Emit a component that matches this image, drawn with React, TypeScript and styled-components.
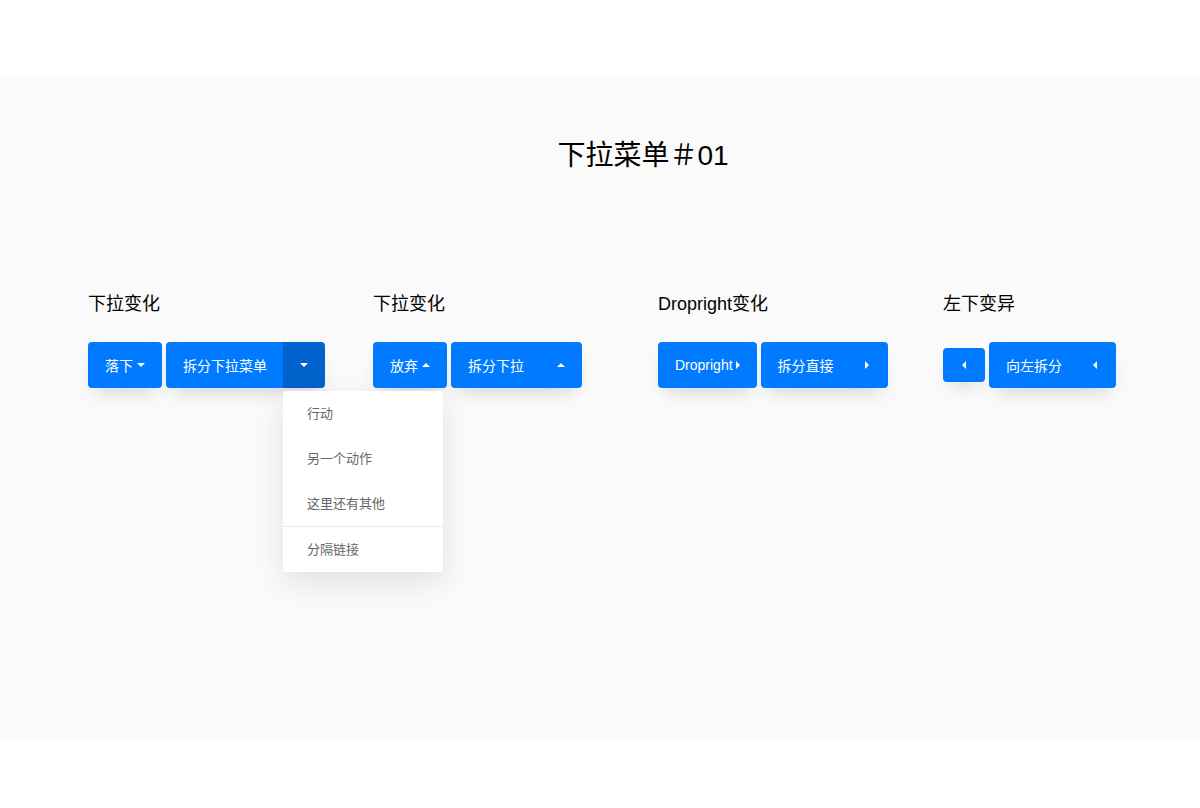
import React from "react";
import styled, { createGlobalStyle, css } from "styled-components";

const GlobalStyle = createGlobalStyle`
  body {
    margin: 0;
    background: #fff;
    font-family: "Liberation Sans", "Noto Sans CJK SC", sans-serif;
  }
`;

type Dir = "down" | "up" | "right" | "left";

const Page = styled.div`
  width: 1200px;
  min-height: 808px;
  padding-top: 75px;
  box-sizing: border-box;
`;

const Section = styled.section`
  background: #fafafa;
  height: 666px;
  padding-top: 65px;
  box-sizing: border-box;
`;

const Title = styled.h2`
  margin: 0;
  padding-left: 86px;
  text-align: center;
  font-size: 28px;
  font-weight: 400;
  line-height: 31px;
  color: #000;
`;

const Grid = styled.div`
  display: grid;
  grid-template-columns: repeat(4, 285px);
  padding-left: 88px;
  margin-top: 120px;
`;

const Label = styled.h3`
  margin: 0 0 24px;
  font-size: 18px;
  font-weight: 400;
  line-height: 27px;
  color: #000;
`;

const Row = styled.div`
  display: flex;
  align-items: center;
  gap: 4px;
  height: 46px;
`;

const btnBase = css`
  border: 0;
  background: #007bff;
  color: #fff;
  font-family: inherit;
  font-size: 14px;
  display: flex;
  align-items: center;
  justify-content: center;
  cursor: pointer;
`;

const Button = styled.button<{ $small?: boolean }>`
  ${btnBase};
  height: ${({ $small }) => ($small ? "34px" : "46px")};
  padding: ${({ $small }) => ($small ? "0" : "0 17px")};
  width: ${({ $small }) => ($small ? "42px" : "auto")};
  gap: 4px;
  border-radius: 4px;
  box-shadow: 0 10px 20px -8px rgba(0, 0, 0, 0.18);
`;

const SplitGroup = styled.div`
  position: relative;
  display: flex;
  height: 46px;
  border-radius: 4px;
  box-shadow: 0 10px 20px -8px rgba(0, 0, 0, 0.18);
`;

const SplitMain = styled.button<{ $pad: number }>`
  ${btnBase};
  height: 46px;
  padding: 0 ${({ $pad }) => $pad}px 0 17px;
  border-radius: 4px 0 0 4px;
`;

const SplitToggle = styled.button<{ $open?: boolean }>`
  ${btnBase};
  width: 42px;
  height: 46px;
  border-radius: 0 4px 4px 0;
  background: ${({ $open }) => ($open ? "#0062cc" : "#007bff")};
  box-shadow: -4px 0 8px -5px rgba(0, 0, 0, 0.08);
`;

const Caret = styled.span<{ $dir: Dir }>`
  display: inline-block;
  width: 0;
  height: 0;
  ${({ $dir }) =>
    $dir === "down"
      ? css`
          border-top: 4px solid #fff;
          border-left: 4px solid transparent;
          border-right: 4px solid transparent;
        `
      : $dir === "up"
      ? css`
          border-bottom: 4px solid #fff;
          border-left: 4px solid transparent;
          border-right: 4px solid transparent;
        `
      : $dir === "right"
      ? css`
          border-left: 4px solid #fff;
          border-top: 4px solid transparent;
          border-bottom: 4px solid transparent;
        `
      : css`
          border-right: 4px solid #fff;
          border-top: 4px solid transparent;
          border-bottom: 4px solid transparent;
        `}
`;

const Menu = styled.ul`
  position: absolute;
  top: 49px;
  right: -118px;
  width: 160px;
  margin: 0;
  padding: 0;
  list-style: none;
  background: #fff;
  border-radius: 3px;
  box-shadow: 0 10px 30px rgba(0, 0, 0, 0.1);
  z-index: 5;
`;

const MenuItem = styled.li`
  height: 45px;
  line-height: 45px;
  padding-left: 24px;
  font-size: 13px;
  color: #666;
`;

const Divider = styled.li`
  height: 1px;
  background: #e9ecef;
`;

const Col: React.FC<{ label: string; children: React.ReactNode }> = ({ label, children }) => (
  <div>
    <Label>{label}</Label>
    <Row>{children}</Row>
  </div>
);

export default function App() {
  return (
    <Page>
      <GlobalStyle />
      <Section>
        <Title>下拉菜单＃01</Title>
        <Grid>
          <Col label="下拉变化">
            <Button>
              落下 <Caret $dir="down" />
            </Button>
            <SplitGroup>
              <SplitMain $pad={16}>拆分下拉菜单</SplitMain>
              <SplitToggle $open>
                <Caret $dir="down" />
              </SplitToggle>
              <Menu>
                <MenuItem>行动</MenuItem>
                <MenuItem>另一个动作</MenuItem>
                <MenuItem>这里还有其他</MenuItem>
                <Divider />
                <MenuItem>分隔链接</MenuItem>
              </Menu>
            </SplitGroup>
          </Col>
          <Col label="下拉变化">
            <Button>
              放弃 <Caret $dir="up" />
            </Button>
            <SplitGroup>
              <SplitMain $pad={16}>拆分下拉</SplitMain>
              <SplitToggle>
                <Caret $dir="up" />
              </SplitToggle>
            </SplitGroup>
          </Col>
          <Col label="Dropright变化">
            <Button style={{ gap: 3 }}>
              Dropright<Caret $dir="right" />
            </Button>
            <SplitGroup>
              <SplitMain $pad={12}>拆分直接</SplitMain>
              <SplitToggle>
                <Caret $dir="right" />
              </SplitToggle>
            </SplitGroup>
          </Col>
          <Col label="左下变异">
            <Button $small>
              <Caret $dir="left" />
            </Button>
            <SplitGroup>
              <SplitMain $pad={12}>向左拆分</SplitMain>
              <SplitToggle>
                <Caret $dir="left" />
              </SplitToggle>
            </SplitGroup>
          </Col>
        </Grid>
      </Section>
    </Page>
  );
}
